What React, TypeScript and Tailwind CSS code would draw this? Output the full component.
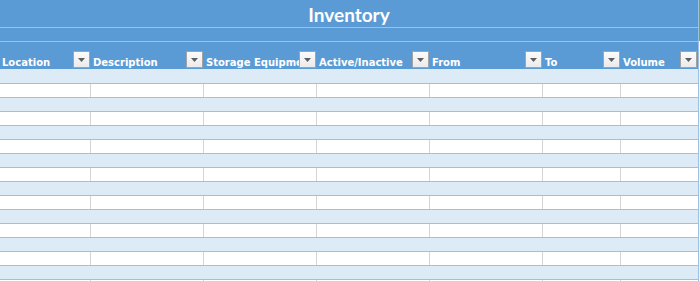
import React from 'react';

const columns = [
  { label: 'Location', width: 'w-[91px]' },
  { label: 'Description', width: 'w-[113px]' },
  { label: 'Storage Equipment', width: 'w-[113px]' },
  { label: 'Active/Inactive', width: 'w-[113px]' },
  { label: 'From', width: 'w-[113px]' },
  { label: 'To', width: 'w-[78px]' },
  { label: 'Volume', width: 'w-[77px]' },
];

// light band first, then white/light pairs, last white one is clipped
const rows = Array.from({ length: 16 }, (_, i) => i % 2 === 0);

const FilterButton: React.FC = () => (
  <div className="absolute right-[1px] bottom-[1px] w-[17px] h-[17px] border border-[#a3a3a3] bg-gradient-to-b from-[#fbfbfb] to-[#ebebeb] flex items-center justify-center">
    <svg width="7" height="4" viewBox="0 0 7 4">
      <path d="M0 0h7L3.5 4z" fill="#5f5f5f" />
    </svg>
  </div>
);

const App: React.FC = () => {
  return (
    <div className="flex w-[700px] h-[281px] overflow-hidden bg-white">
      <div className="w-[699px] shrink-0 border-r border-[#9bc2e6]">
        <div className="h-[28px] bg-[#5b9bd5] border-b border-[#9bc2e6] flex items-center justify-center">
          <span className="text-white font-bold text-[19px] leading-none font-['Lato',sans-serif] pt-[1px]">
            Inventory
          </span>
        </div>
        <div className="h-[14px] bg-[#5b9bd5] border-b border-[#9bc2e6]" />
        <div className="h-[27px] bg-[#5b9bd5] flex">
          {columns.map((col) => (
            <div key={col.label} className={`${col.width} relative overflow-hidden flex items-end`}>
              <span className="pl-[2px] pb-[1px] whitespace-nowrap text-white font-bold text-[10px] leading-[11px] font-['DejaVu_Sans',sans-serif]">
                {col.label}
              </span>
              <FilterButton />
            </div>
          ))}
        </div>
        {rows.map((light, i) =>
          light ? (
            <div
              key={i}
              className={`${i === 0 ? 'h-[15px]' : 'h-[14px]'} bg-[#ddebf7] border-b border-[#9bc2e6]`}
            />
          ) : (
            <div key={i} className="h-[14px] bg-white border-b border-[#9bc2e6] flex">
              {columns.map((col, j) => (
                <div
                  key={col.label}
                  className={`${col.width} h-full ${j < columns.length - 1 ? 'border-r border-[#d4d4d4]' : ''}`}
                />
              ))}
            </div>
          )
        )}
      </div>
      <div className="w-[1px] flex flex-col">
        <div className="h-[41px] bg-[#70ad47]" />
        <div className="flex-1 bg-[#f3f3f3]" />
      </div>
    </div>
  );
};

export default App;
